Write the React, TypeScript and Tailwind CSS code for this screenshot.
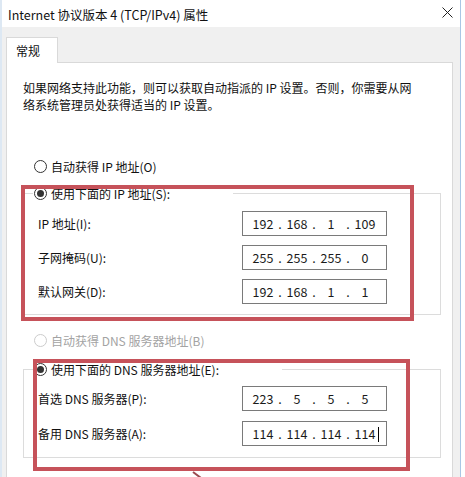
import React from "react";

const font = { fontFamily: '"Segoe UI", "Noto Sans CJK SC", "Noto Sans", sans-serif' };

function Radio({ checked = false, disabled = false }: { checked?: boolean; disabled?: boolean }) {
    return (
        <span
            className={`flex h-[13px] w-[13px] items-center justify-center rounded-full border bg-white ${
                disabled ? "border-[#cccccc]" : "border-[#333333]"
            }`}
        >
            {checked && <span className="h-[7px] w-[7px] rounded-full bg-[#333333]" />}
        </span>
    );
}

function IpBox({ parts, caret = false }: { parts: string[]; caret?: boolean }) {
    return (
        <div className="relative flex h-[25px] w-[145px] items-center border border-[#7a7a7a] bg-white pl-[5px] text-[12.5px] text-[#1a1a1a]">
            {parts.map((p, i) => (
                <React.Fragment key={i}>
                    {i > 0 && <span className="w-[4px] text-center">.</span>}
                    <span className="w-[30px] text-center">{p}</span>
                </React.Fragment>
            ))}
            {caret && <span className="absolute left-[135px] top-[5px] h-[15px] w-px bg-black" />}
        </div>
    );
}

function Row({ label, parts, caret }: { label: string; parts: string[]; caret?: boolean }) {
    return (
        <div className="flex items-center">
            <span className="w-[218px] pl-[14px]">{label}</span>
            <IpBox parts={parts} caret={caret} />
        </div>
    );
}

export default function App() {
    return (
        <div className="relative h-[477px] w-[465px] overflow-hidden bg-white text-[12px] leading-[17px] text-[#111111]" style={font}>
            <div className="h-full w-[461px] border-l-2 border-r border-l-[#dde8f3] border-r-[#a9c6e4] bg-[#f0f0f0]">
                {/* title bar */}
                <div className="flex h-[27px] items-center justify-between bg-white pl-[6px] pr-[7px] text-[12.5px]">
                    <span className="pt-[1px]">Internet 协议版本 4 (TCP/IPv4) 属性</span>
                    <svg width="11" height="11" viewBox="0 0 11 11" className="mt-[-2px]">
                        <path d="M0.5 0.5 L10.5 10.5 M10.5 0.5 L0.5 10.5" stroke="#222" strokeWidth="1" />
                    </svg>
                </div>

                {/* tab */}
                <div className="pt-[10px] pl-[4px]">
                    <div className="relative z-10 -mb-px flex h-[26px] w-[52px] items-center border border-b-0 border-[#d9d9d9] bg-white pl-[9px]">
                        常规
                    </div>
                    <div className="h-[430px] w-[447px] border border-[#d9d9d9] bg-white pt-[16px]">
                        <p className="pl-[16px]">
                            如果网络支持此功能，则可以获取自动指派的 IP 设置。否则，你需要从网
                            <br />
                            络系统管理员处获得适当的 IP 设置。
                        </p>

                        <div className="mt-[45px] flex items-center gap-[4px] pl-[27px]">
                            <Radio />
                            <span>自动获得 IP 地址(O)</span>
                        </div>

                        <div className="ml-[16px] mt-[18px] w-[418px] border border-[#dcdcdc] pb-[10px]">
                            <div className="-mt-[9px] ml-[9px] flex w-[200px] items-center gap-[4px] bg-white pl-[1px]">
                                <Radio checked />
                                <span>使用下面的 IP 地址(S):</span>
                            </div>
                            <div className="mt-[9px] flex flex-col gap-[9px]">
                                <Row label="IP 地址(I):" parts={["192", "168", "1", "109"]} />
                                <Row label="子网掩码(U):" parts={["255", "255", "255", "0"]} />
                                <Row label="默认网关(D):" parts={["192", "168", "1", "1"]} />
                            </div>
                        </div>

                        <div className="mt-[17px] flex items-center gap-[4px] pl-[27px] text-[#a3a3a3]">
                            <Radio disabled />
                            <span>自动获得 DNS 服务器地址(B)</span>
                        </div>

                        <div className="ml-[16px] mt-[20px] w-[418px] border border-[#dcdcdc] pb-[11px]">
                            <div className="-mt-[9px] ml-[9px] flex w-[249px] items-center gap-[4px] bg-white pl-[1px]">
                                <Radio checked />
                                <span>使用下面的 DNS 服务器地址(E):</span>
                            </div>
                            <div className="mt-[8px] flex flex-col gap-[10px]">
                                <Row label="首选 DNS 服务器(P):" parts={["223", "5", "5", "5"]} />
                                <Row label="备用 DNS 服务器(A):" parts={["114", "114", "114", "114"]} caret />
                            </div>
                        </div>
                    </div>
                </div>
            </div>

            {/* red annotation boxes */}
            <div className="absolute left-[21px] top-[185px] h-[136px] w-[393px] border-4 border-[#c6525a]" />
            <div className="absolute left-[33px] top-[359px] h-[112px] w-[377px] border-4 border-[#c6525a]" />
            <svg className="absolute left-[190px] top-[471px]" width="14" height="8" viewBox="0 0 14 8">
                <path d="M3 1 L11 7" stroke="#9a4a50" strokeWidth="2" />
            </svg>
        </div>
    );
}
